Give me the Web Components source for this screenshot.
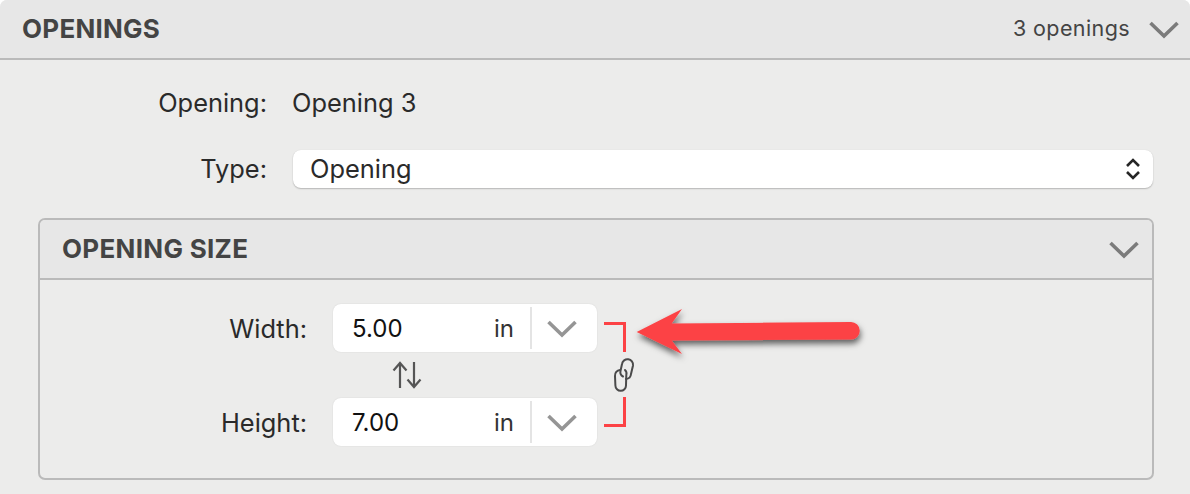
<!DOCTYPE html>
<html>
<head>
<meta charset="utf-8">
<title>Openings</title>
<style>
  html, body { margin: 0; height: 100%; background: #fff; }
  body { font-family: Inter, "Liberation Sans", sans-serif; overflow: hidden; }
</style>
</head>
<body>
<openings-panel heading="OPENINGS" summary="3 openings">
  <form-row label="Opening:" label-width="267" gap="25"><span style="display:block;padding-bottom:2px">Opening 3</span></form-row>
  <form-row label="Type:" label-width="267" gap="26" style="margin-top:30px"><select-box value="Opening"></select-box></form-row>
  <size-section heading="OPENING SIZE">
    <size-field label="Width:" value="5.00" unit="in"></size-field>
    <swap-icon></swap-icon>
    <size-field label="Height:" value="7.00" unit="in"></size-field>
  </size-section>
</openings-panel>

<script>
const CHEVRON = (color) => `
  <svg width="30" height="18" viewBox="0 0 30 18" fill="none" aria-hidden="true">
    <path d="M1.5 2 L15 15 L28.5 2" stroke="${color}" stroke-width="3.6"/>
  </svg>`;

class OpeningsPanel extends HTMLElement {
  constructor() {
    super();
    this.attachShadow({ mode: "open" });
  }
  connectedCallback() {
    this.shadowRoot.innerHTML = `
    <style>
      :host { display: block; position: relative; height: 494px; background: #ececeb; border-radius: 7px 7px 0 0; overflow: hidden; color: #2a2a2a; font-size: 25.4px; }
      header { display: flex; align-items: center; box-sizing: border-box; height: 60px; padding: 0 11px 2px 22px; background: #e7e7e7; border-bottom: 2px solid #bababa; }
      h2 { flex: 1; margin: 0; font-size: 26px; font-weight: 700; color: #444; letter-spacing: .25px; }
      .summary { font-size: 21.5px; color: #444; margin-right: 19px; letter-spacing: .4px; }
      svg { display: block; }
      header svg { margin-top: 4px; }
      .body { padding-top: 27px; }
      .note { position: absolute; left: 600px; top: 300px; overflow: visible; }
    </style>
    <header>
      <h2>${this.getAttribute("heading")}</h2>
      <span class="summary">${this.getAttribute("summary")}</span>
      ${CHEVRON("#7b7b7b")}
    </header>
    <div class="body"><slot></slot></div>
    <svg class="note" width="270" height="135" viewBox="600 300 270 135" fill="none" aria-hidden="true">
      <defs>
        <filter id="drop" x="-10%" y="-40%" width="120%" height="190%">
          <feDropShadow dx="1" dy="4" stdDeviation="3" flood-color="#000" flood-opacity=".6"/>
        </filter>
      </defs>
      <path d="M604 323.5 H624.5 V352 M624.5 397 V425.5 H604" stroke="#fc4245" stroke-width="3"/>
      <g stroke="#4a4a4a" stroke-width="2" stroke-linecap="round">
        <path d="M623 376.5 A5 5 0 0 1 620.5 371 L622 364 A5.5 5.5 0 0 1 633 365.5 L631 374 A5.5 5.5 0 0 1 626 379"/>
        <path d="M625 370 A5 5 0 0 1 626.3 375 L626 385.5 A5.3 5.3 0 0 1 615.4 385.5 L615 376 A5.5 5.5 0 0 1 620 370"/>
      </g>
      <path filter="url(#drop)" fill="#fc4245" d="M636.7 332 L682 309 L671.7 323.5 L851 322 A8.7 8.7 0 0 1 851 339.5 L671.7 340.5 L682 354 Z"/>
    </svg>`;
  }
}
customElements.define("openings-panel", OpeningsPanel);

class FormRow extends HTMLElement {
  constructor() {
    super();
    this.attachShadow({ mode: "open" });
  }
  connectedCallback() {
    this.shadowRoot.innerHTML = `
    <style>
      :host { display: grid; grid-template-columns: ${this.getAttribute("label-width")}px 1fr; column-gap: ${this.getAttribute("gap")}px; align-items: center; padding-right: 37px; }
      .label { text-align: right; padding-bottom: 2px; }
    </style>
    <div class="label">${this.getAttribute("label")}</div>
    <div><slot></slot></div>`;
  }
}
customElements.define("form-row", FormRow);

class SelectBox extends HTMLElement {
  constructor() {
    super();
    this.attachShadow({ mode: "open" });
  }
  connectedCallback() {
    this.shadowRoot.innerHTML = `
    <style>
      :host { display: flex; align-items: center; justify-content: space-between; box-sizing: border-box; height: 38px; padding: 0 12px 2px 17px; background: #fff; border-radius: 8px; box-shadow: 0 1px 1.5px rgba(0,0,0,.22), 0 0 1px rgba(0,0,0,.1); }
      svg { display: block; margin-top: 2px; }
    </style>
    <span>${this.getAttribute("value")}</span>
    <svg width="16" height="24" viewBox="0 0 16 24" fill="none" stroke="#262626" stroke-width="2.6" aria-hidden="true">
      <path d="M2 9 L8 3 L14 9 M2 15 L8 21 L14 15"/>
    </svg>`;
  }
}
customElements.define("select-box", SelectBox);

class SizeSection extends HTMLElement {
  constructor() {
    super();
    this.attachShadow({ mode: "open" });
  }
  connectedCallback() {
    this.shadowRoot.innerHTML = `
    <style>
      :host { display: block; height: 258px; margin: 30px 36px 0 38px; border: 2px solid #bababa; border-radius: 7px; overflow: hidden; }
      header { display: flex; align-items: center; justify-content: space-between; box-sizing: border-box; height: 60px; padding: 0 13px 2px 22px; background: #e7e7e7; border-bottom: 2px solid #bababa; }
      h3 { margin: 0; font-size: 26px; font-weight: 700; color: #444; letter-spacing: .3px; }
      svg { display: block; margin-top: 4px; }
      .rows { padding-top: 24px; }
    </style>
    <header>
      <h3>${this.getAttribute("heading")}</h3>
      ${CHEVRON("#7b7b7b")}
    </header>
    <div class="rows"><slot></slot></div>`;
  }
}
customElements.define("size-section", SizeSection);

class SizeField extends HTMLElement {
  constructor() {
    super();
    this.attachShadow({ mode: "open" });
  }
  connectedCallback() {
    this.shadowRoot.innerHTML = `
    <style>
      :host { display: grid; grid-template-columns: 267px 264px; column-gap: 26px; align-items: center; }
      .label { text-align: right; }
      .field { display: flex; align-items: center; height: 48px; font-size: 24px; background: #fff; border-radius: 8px; box-shadow: 0 0 1.5px rgba(0,0,0,.12); }
      .value { flex: 1; padding-left: 19px; color: #111; }
      .unit { margin-right: 16px; color: #333; }
      .arrow { display: flex; align-items: center; justify-content: center; width: 67px; height: 42px; padding-right: 6px; border-left: 2px solid #e4e4e4; box-sizing: border-box; }
      svg { display: block; margin-top: 2px; }
    </style>
    <div class="label">${this.getAttribute("label")}</div>
    <div class="field">
      <span class="value">${this.getAttribute("value")}</span>
      <span class="unit">${this.getAttribute("unit")}</span>
      <div class="arrow">${CHEVRON("#959595")}</div>
    </div>`;
  }
}
customElements.define("size-field", SizeField);

class SwapIcon extends HTMLElement {
  constructor() {
    super();
    this.attachShadow({ mode: "open" });
  }
  connectedCallback() {
    this.shadowRoot.innerHTML = `
    <style>
      :host { display: flex; align-items: center; height: 46px; padding-left: 352px; }
      svg { display: block; }
    </style>
    <svg width="30" height="28" viewBox="0 0 30 28" fill="none" stroke="#555" stroke-width="2.2" aria-hidden="true">
      <path d="M8 27 V2 M1.5 9.5 L8 2 L14.5 9.5 M22 1 V26 M15.5 18.5 L22 26 L28.5 18.5"/>
    </svg>`;
  }
}
customElements.define("swap-icon", SwapIcon);
</script>
</body>
</html>
